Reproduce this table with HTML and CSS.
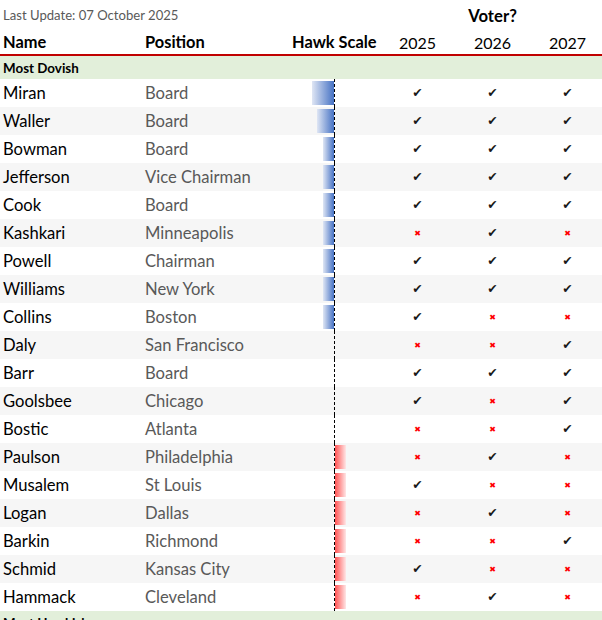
FILE: index.html
```html
<!DOCTYPE html>
<html>
<head>
<meta charset="utf-8">
<link rel="stylesheet" href="styles.css">
</head>
<body>
<div class="sheet">
  <div class="row top">
    <div class="cell name update">Last Update: 07 October 2025</div>
    <div class="cell"></div>
    <div class="cell"></div>
    <div class="cell"></div>
    <div class="cell center voter">Voter?</div>
    <div class="cell"></div>
  </div>
  <div class="row head">
    <div class="cell name">Name</div>
    <div class="cell pos">Position</div>
    <div class="cell hawkhead">Hawk Scale</div>
    <div class="cell center year">2025</div>
    <div class="cell center year">2026</div>
    <div class="cell center year">2027</div>
  </div>
  <div class="band">Most Dovish</div>

  <div class="row member">
    <div class="cell name">Miran</div><div class="cell pos">Board</div>
    <div class="cell hawk"><div class="dove"><span class="bar blue" style="width:22px"></span></div><div class="axis"></div><div class="hawkside"></div></div>
    <div class="cell center"><span class="yes">✔</span></div><div class="cell center"><span class="yes">✔</span></div><div class="cell center"><span class="yes">✔</span></div>
  </div>
  <div class="row member alt">
    <div class="cell name">Waller</div><div class="cell pos">Board</div>
    <div class="cell hawk"><div class="dove"><span class="bar blue" style="width:17px"></span></div><div class="axis"></div><div class="hawkside"></div></div>
    <div class="cell center"><span class="yes">✔</span></div><div class="cell center"><span class="yes">✔</span></div><div class="cell center"><span class="yes">✔</span></div>
  </div>
  <div class="row member">
    <div class="cell name">Bowman</div><div class="cell pos">Board</div>
    <div class="cell hawk"><div class="dove"><span class="bar blue" style="width:11px"></span></div><div class="axis"></div><div class="hawkside"></div></div>
    <div class="cell center"><span class="yes">✔</span></div><div class="cell center"><span class="yes">✔</span></div><div class="cell center"><span class="yes">✔</span></div>
  </div>
  <div class="row member alt">
    <div class="cell name">Jefferson</div><div class="cell pos">Vice Chairman</div>
    <div class="cell hawk"><div class="dove"><span class="bar blue" style="width:11px"></span></div><div class="axis"></div><div class="hawkside"></div></div>
    <div class="cell center"><span class="yes">✔</span></div><div class="cell center"><span class="yes">✔</span></div><div class="cell center"><span class="yes">✔</span></div>
  </div>
  <div class="row member">
    <div class="cell name">Cook</div><div class="cell pos">Board</div>
    <div class="cell hawk"><div class="dove"><span class="bar blue" style="width:11px"></span></div><div class="axis"></div><div class="hawkside"></div></div>
    <div class="cell center"><span class="yes">✔</span></div><div class="cell center"><span class="yes">✔</span></div><div class="cell center"><span class="yes">✔</span></div>
  </div>
  <div class="row member alt">
    <div class="cell name">Kashkari</div><div class="cell pos">Minneapolis</div>
    <div class="cell hawk"><div class="dove"><span class="bar blue" style="width:11px"></span></div><div class="axis"></div><div class="hawkside"></div></div>
    <div class="cell center"><span class="no">✖</span></div><div class="cell center"><span class="yes">✔</span></div><div class="cell center"><span class="no">✖</span></div>
  </div>
  <div class="row member">
    <div class="cell name">Powell</div><div class="cell pos">Chairman</div>
    <div class="cell hawk"><div class="dove"><span class="bar blue" style="width:11px"></span></div><div class="axis"></div><div class="hawkside"></div></div>
    <div class="cell center"><span class="yes">✔</span></div><div class="cell center"><span class="yes">✔</span></div><div class="cell center"><span class="yes">✔</span></div>
  </div>
  <div class="row member alt">
    <div class="cell name">Williams</div><div class="cell pos">New York</div>
    <div class="cell hawk"><div class="dove"><span class="bar blue" style="width:11px"></span></div><div class="axis"></div><div class="hawkside"></div></div>
    <div class="cell center"><span class="yes">✔</span></div><div class="cell center"><span class="yes">✔</span></div><div class="cell center"><span class="yes">✔</span></div>
  </div>
  <div class="row member">
    <div class="cell name">Collins</div><div class="cell pos">Boston</div>
    <div class="cell hawk"><div class="dove"><span class="bar blue" style="width:11px"></span></div><div class="axis"></div><div class="hawkside"></div></div>
    <div class="cell center"><span class="yes">✔</span></div><div class="cell center"><span class="no">✖</span></div><div class="cell center"><span class="no">✖</span></div>
  </div>
  <div class="row member alt">
    <div class="cell name">Daly</div><div class="cell pos">San Francisco</div>
    <div class="cell hawk"><div class="dove"></div><div class="axis"></div><div class="hawkside"></div></div>
    <div class="cell center"><span class="no">✖</span></div><div class="cell center"><span class="no">✖</span></div><div class="cell center"><span class="yes">✔</span></div>
  </div>
  <div class="row member">
    <div class="cell name">Barr</div><div class="cell pos">Board</div>
    <div class="cell hawk"><div class="dove"></div><div class="axis"></div><div class="hawkside"></div></div>
    <div class="cell center"><span class="yes">✔</span></div><div class="cell center"><span class="yes">✔</span></div><div class="cell center"><span class="yes">✔</span></div>
  </div>
  <div class="row member alt">
    <div class="cell name">Goolsbee</div><div class="cell pos">Chicago</div>
    <div class="cell hawk"><div class="dove"></div><div class="axis"></div><div class="hawkside"></div></div>
    <div class="cell center"><span class="yes">✔</span></div><div class="cell center"><span class="no">✖</span></div><div class="cell center"><span class="yes">✔</span></div>
  </div>
  <div class="row member">
    <div class="cell name">Bostic</div><div class="cell pos">Atlanta</div>
    <div class="cell hawk"><div class="dove"></div><div class="axis"></div><div class="hawkside"></div></div>
    <div class="cell center"><span class="no">✖</span></div><div class="cell center"><span class="no">✖</span></div><div class="cell center"><span class="yes">✔</span></div>
  </div>
  <div class="row member alt">
    <div class="cell name">Paulson</div><div class="cell pos">Philadelphia</div>
    <div class="cell hawk"><div class="dove"></div><div class="axis"></div><div class="hawkside"><span class="bar red" style="width:11px"></span></div></div>
    <div class="cell center"><span class="no">✖</span></div><div class="cell center"><span class="yes">✔</span></div><div class="cell center"><span class="no">✖</span></div>
  </div>
  <div class="row member">
    <div class="cell name">Musalem</div><div class="cell pos">St Louis</div>
    <div class="cell hawk"><div class="dove"></div><div class="axis"></div><div class="hawkside"><span class="bar red" style="width:11px"></span></div></div>
    <div class="cell center"><span class="yes">✔</span></div><div class="cell center"><span class="no">✖</span></div><div class="cell center"><span class="no">✖</span></div>
  </div>
  <div class="row member alt">
    <div class="cell name">Logan</div><div class="cell pos">Dallas</div>
    <div class="cell hawk"><div class="dove"></div><div class="axis"></div><div class="hawkside"><span class="bar red" style="width:11px"></span></div></div>
    <div class="cell center"><span class="no">✖</span></div><div class="cell center"><span class="yes">✔</span></div><div class="cell center"><span class="no">✖</span></div>
  </div>
  <div class="row member">
    <div class="cell name">Barkin</div><div class="cell pos">Richmond</div>
    <div class="cell hawk"><div class="dove"></div><div class="axis"></div><div class="hawkside"><span class="bar red" style="width:11px"></span></div></div>
    <div class="cell center"><span class="no">✖</span></div><div class="cell center"><span class="no">✖</span></div><div class="cell center"><span class="yes">✔</span></div>
  </div>
  <div class="row member alt">
    <div class="cell name">Schmid</div><div class="cell pos">Kansas City</div>
    <div class="cell hawk"><div class="dove"></div><div class="axis"></div><div class="hawkside"><span class="bar red" style="width:11px"></span></div></div>
    <div class="cell center"><span class="yes">✔</span></div><div class="cell center"><span class="no">✖</span></div><div class="cell center"><span class="no">✖</span></div>
  </div>
  <div class="row member">
    <div class="cell name">Hammack</div><div class="cell pos">Cleveland</div>
    <div class="cell hawk"><div class="dove"></div><div class="axis"></div><div class="hawkside"><span class="bar red" style="width:11px"></span></div></div>
    <div class="cell center"><span class="no">✖</span></div><div class="cell center"><span class="yes">✔</span></div><div class="cell center"><span class="no">✖</span></div>
  </div>
  <div class="band">Most Hawkish</div>
</div>
</body>
</html>
```
FILE: styles.css
```css
html, body {
  margin: 0;
  padding: 0;
  overflow: hidden;
  background: #ffffff;
}
.sheet {
  width: 605px;
  font-family: Lato, "Liberation Sans", sans-serif;
  color: #000;
}
.row {
  display: grid;
  grid-template-columns: 142px 148px 90px 75px 75px 75px;
  align-items: stretch;
}
.cell {
  display: flex;
  align-items: center;
  white-space: nowrap;
}
.center { justify-content: center; }
.top { height: 28px; }
.update {
  font-size: 13.1px;
  color: #595959;
  padding-top: 2px;
}
.voter {
  font-weight: bold;
  font-size: 16.7px;
  padding-top: 3px;
}
.head {
  height: 26px;
  border-bottom: 2px solid #c00000;
  font-size: 16.4px;
}
.head .name, .head .pos, .hawkhead { font-weight: bold; }
.hawkhead { padding-left: 2px; }
.year { font-weight: normal; font-size: 16px; padding-top: 2px; }
.name { padding-left: 3px; }
.pos { padding-left: 3px; }
.band {
  height: 23px;
  background: #e2efda;
  font-weight: bold;
  font-size: 13.4px;
  padding-left: 3px;
  display: flex;
  align-items: center;
}
.member {
  height: 28px;
  font-size: 16.6px;
  background: #ffffff;
}
.member.alt { background: #f6f6f6; }
.member .pos { color: #595959; }
.hawk {
  align-items: stretch;
}
.dove {
  width: 44px;
  display: flex;
  justify-content: flex-end;
  padding: 2px 0 2px;
  box-sizing: border-box;
}
.axis {
  width: 0;
  border-left: 1px dashed #000;
}
.hawkside {
  flex: 1;
  display: flex;
  padding: 2px 0 2px;
  box-sizing: border-box;
}
.bar { display: block; height: 100%; }
.blue { background: linear-gradient(to right, #dfe6f4, #4672c4); }
.red { background: linear-gradient(to right, #ff5454, #ffe6e6); }
.yes {
  font-family: "DejaVu Sans", sans-serif;
  font-size: 12.5px;
  color: #1a1a1a;
  padding-bottom: 2px;
}
.no {
  font-family: "DejaVu Sans", sans-serif;
  font-size: 8px;
  color: #ff0000;
}
```
